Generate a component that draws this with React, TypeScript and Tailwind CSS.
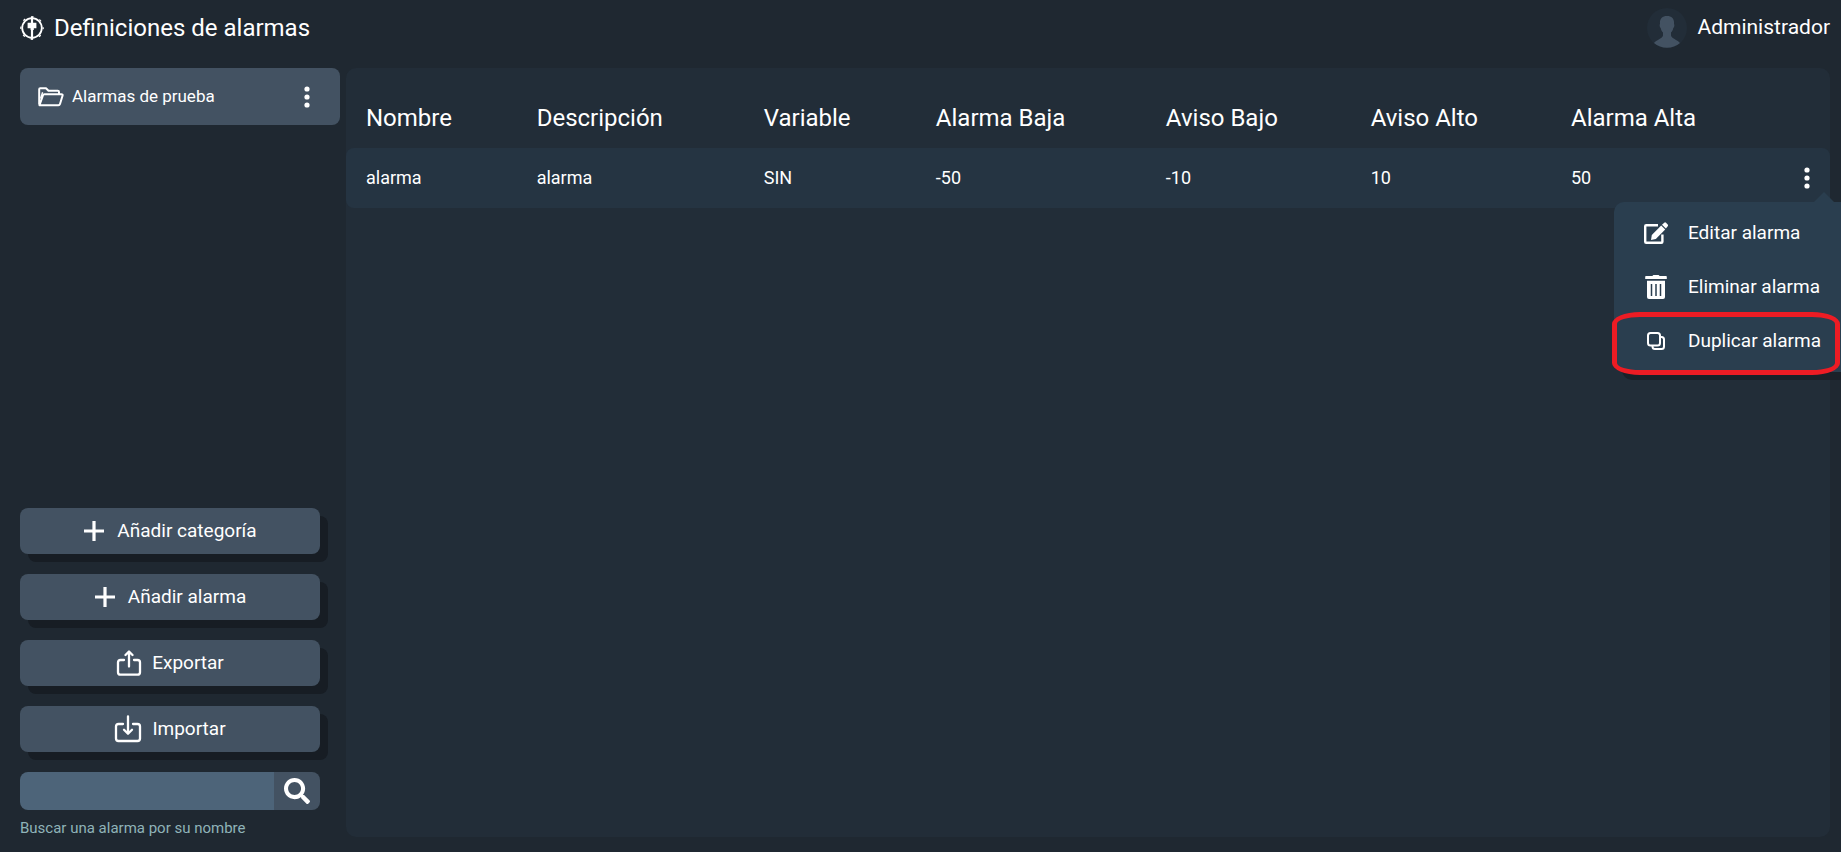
import { useState } from 'react';
import { FaSearch } from 'react-icons/fa';

type Alarm = {
  name: string;
  description: string;
  variable: string;
  lowAlarm: number;
  lowWarning: number;
  highWarning: number;
  highAlarm: number;
};

const alarms: Alarm[] = [
  {
    name: 'alarma',
    description: 'alarma',
    variable: 'SIN',
    lowAlarm: -50,
    lowWarning: -10,
    highWarning: 10,
    highAlarm: 50,
  },
];

const columns = [
  { label: 'Nombre', width: 'w-[11.5%]' },
  { label: 'Descripción', width: 'w-[15.3%]' },
  { label: 'Variable', width: 'w-[11.6%]' },
  { label: 'Alarma Baja', width: 'w-[15.5%]' },
  { label: 'Aviso Bajo', width: 'w-[13.8%]' },
  { label: 'Aviso Alto', width: 'w-[13.5%]' },
  { label: 'Alarma Alta', width: '' },
];

function LogoIcon() {
  return (
    <svg viewBox="0 0 24 24" className="w-6 h-6" fill="none" stroke="currentColor">
      <circle cx="12" cy="12" r="9.8" strokeWidth="1.8" />
      <circle cx="12" cy="12" r="11.2" strokeWidth="1.2" strokeDasharray="2.4 6.4" strokeDashoffset="1.2" />
      <path d="M12 0.5v23" strokeWidth="2.2" />
      <path d="M7.6 6.8h8.8v5.4h-2.6V14h-3.200v-1.800H7.600z" fill="currentColor" stroke="none" />
    </svg>
  );
}

function FolderIcon() {
  return (
    <svg viewBox="0 0 26 20" className="w-[26px] h-5" fill="none" stroke="currentColor" strokeWidth="2" strokeLinejoin="round">
      <path d="M1.2 17.5V2.2Q1.2 1.2 2.2 1.2H8l2.5 2.6h9.3q1.2 0 1.2 1.2v2" />
      <path d="M1.5 18.2 5 8.2q.4-1 1.4-1h17q1.6 0 1.2 1.4l-2.6 8.4q-.4 1.2-1.6 1.2H1.5z" />
      <path d="M2.6 11.5 4.6 5.2" strokeWidth="1.4" />
    </svg>
  );
}

function DotsIcon() {
  return (
    <svg viewBox="0 0 6 22" className="w-[6px] h-[22px]" fill="currentColor">
      <circle cx="3" cy="3" r="2.6" />
      <circle cx="3" cy="11" r="2.6" />
      <circle cx="3" cy="19" r="2.6" />
    </svg>
  );
}

function PlusIcon() {
  return (
    <svg viewBox="0 0 22 22" className="w-[22px] h-[22px]" fill="none" stroke="currentColor" strokeWidth="3.2">
      <path d="M11 1v20M1 11h20" />
    </svg>
  );
}

function ExportIcon() {
  return (
    <svg viewBox="0 0 26 26" className="w-[26px] h-[26px]" fill="none" stroke="currentColor" strokeWidth="2.3" strokeLinecap="round" strokeLinejoin="round">
      <path d="M8 10H4.5Q2 10 2 12.5v9.7Q2 24.7 4.5 24.7h17q2.5 0 2.5-2.5v-9.7Q24 10 21.5 10H18" />
      <path d="M13 16.5V2M9.5 5 13 1.5 16.5 5" />
    </svg>
  );
}

function ImportIcon() {
  return (
    <svg viewBox="0 0 28 28" className="w-7 h-7" fill="none" stroke="currentColor" strokeWidth="2.3" strokeLinecap="round" strokeLinejoin="round">
      <path d="M9 9H4.5Q2 9 2 11.5v12Q2 26 4.5 26h19q2.5 0 2.5-2.5v-12Q26 9 23.5 9H19" />
      <path d="M14 1.5v17M10 14.8l4 4 4-4" />
    </svg>
  );
}

function EditIcon() {
  return (
    <svg viewBox="0 0 24 22" className="w-6 h-[22px]" fill="none">
      <path d="M14 3.2H2.2Q1.2 3.2 1.2 4.2v15.6q0 1 1 1h15.2q1 0 1-1V12.5" stroke="currentColor" strokeWidth="2.4" />
      <path d="M7 18l.8-5.1 9.4-9.3 4 4-9.4 9.4z" fill="currentColor" />
      <path d="M18 2.8 20.2.7q.9-.7 1.8 0l1.7 1.8q.7.9 0 1.8L21.9 6.5z" fill="currentColor" />
    </svg>
  );
}

function TrashIcon() {
  return (
    <svg viewBox="0 0 22 24" className="w-6 h-6">
      <path d="M7.5 1q.3-1 1.2-1h4.6q.9 0 1.2 1H21q.8 0 .8.8v2.2H.2V1.8Q.2 1 1 1z" fill="currentColor" />
      <path d="M2 5.8h18V22q0 2-2 2H4q-2 0-2-2z" fill="currentColor" />
      <path d="M6.5 9v12M11 9v12M15.5 9v12" stroke="#2a3e4f" strokeWidth="1.5" />
    </svg>
  );
}

function CopyIcon() {
  return (
    <svg viewBox="0 0 18 18" className="w-[18px] h-[18px] mx-[3px]" fill="none" stroke="currentColor" strokeWidth="2" strokeLinejoin="round">
      <rect x="1" y="1" width="12" height="12.5" rx="2.5" />
      <path d="M13 5h1.5Q17 5 17 7.5V14.5q0 2.5-2.5 2.5H8q-2.5 0-2.5-2.5v-1" />
    </svg>
  );
}

function Avatar() {
  return (
    <svg viewBox="0 0 40 40" className="w-10 h-10">
      <circle cx="20" cy="20" r="20" fill="#222d38" />
      <path d="M20 8c5 0 7.5 3 7 8 .6.5.5 3-.7 4-.4 2-1.3 3.5-2.3 4.5v3c.5 3 6 4 9 7.5A20 20 0 0 1 7 35c3-3.500 8.500-4.500 9-7.500v-3c-1-1-1.900-2.500-2.300-4.500-1.200-1-1.300-3.500-.7-4-.5-5 2-8 7-8z" fill="#435262" />
    </svg>
  );
}

const actions = [
  { label: 'Añadir categoría', icon: <PlusIcon />, gap: 'gap-3' },
  { label: 'Añadir alarma', icon: <PlusIcon />, gap: 'gap-3' },
  { label: 'Exportar', icon: <ExportIcon />, gap: 'gap-[10px]' },
  { label: 'Importar', icon: <ImportIcon />, gap: 'gap-[10px]' },
];

const menuItems = [
  { label: 'Editar alarma', icon: <EditIcon /> },
  { label: 'Eliminar alarma', icon: <TrashIcon /> },
  { label: 'Duplicar alarma', icon: <CopyIcon /> },
];

function AlarmMenu() {
  return (
    <div className="absolute top-[54px] -right-3 w-[228px] h-[170px] rounded-l-[10px] bg-[#2a3e4f] shadow-[8px_8px_0_#1a2129] z-10">
      <span className="absolute -top-[10px] right-2 border-x-10 border-b-10 border-x-transparent border-b-[#2a3e4f]" />
      <ul className="pt-1">
        {menuItems.map((item) => (
          <li key={item.label}>
            <button className="w-full h-[54px] flex items-center gap-5 pl-[30px] text-[19px] whitespace-nowrap">
              {item.icon}
              {item.label}
            </button>
          </li>
        ))}
      </ul>
      {/* Highlight around the last option */}
      <div className="absolute -left-[2px] right-[2px] top-[110px] h-[63px] border-[5px] border-[#ed1c24] rounded-[28px/12px] pointer-events-none" />
    </div>
  );
}

export default function App() {
  const [search, setSearch] = useState('');
  const [openRow, setOpenRow] = useState<number | null>(0);

  return (
    <div className="h-screen flex flex-col overflow-hidden bg-[#1f2831] text-white font-[Roboto,sans-serif]">
      {/* Header */}
      <header className="h-[68px] shrink-0 flex items-start justify-between pl-5 pr-[11px] pt-2">
        <div className="h-10 flex items-center gap-[10px]">
          <LogoIcon />
          <h1 className="text-2xl">Definiciones de alarmas</h1>
        </div>
        <div className="h-10 flex items-center gap-[10px]">
          <Avatar />
          <span className="text-[21px]">Administrador</span>
        </div>
      </header>

      <div className="flex-1 min-h-0 flex gap-[6px] pr-[11px] pb-[15px]">
        {/* Sidebar */}
        <aside className="w-[340px] shrink-0 pl-5 flex flex-col">
          <div className="h-[57px] flex items-center rounded-lg bg-[#435262] pl-[18px] pr-[30px]">
            <button className="flex-1 flex items-center gap-2 text-[17px]">
              <FolderIcon />
              Alarmas de prueba
            </button>
            <button aria-label="Opciones de categoría">
              <DotsIcon />
            </button>
          </div>

          <div className="mt-auto mr-5 flex flex-col gap-5">
            {actions.map((action) => (
              <button
                key={action.label}
                className={`h-[46px] flex items-center justify-center rounded-lg bg-[#435262] shadow-[8px_8px_0_#171d24] text-[19px] ${action.gap}`}
              >
                {action.icon}
                {action.label}
              </button>
            ))}
            <div>
              <div className="h-[38px] flex rounded-lg overflow-hidden">
                <input
                  id="search"
                  type="text"
                  value={search}
                  onChange={(e) => setSearch(e.target.value)}
                  className="flex-1 min-w-0 bg-[#4d6479] px-3 outline-none"
                />
                <button aria-label="Buscar" className="w-[46px] flex items-center justify-center bg-[#435262]">
                  <FaSearch className="w-[26px] h-[26px]" />
                </button>
              </div>
              <label htmlFor="search" className="block mt-[10px] text-[15px] leading-[17px] text-[#8fb3b8]">
                Buscar una alarma por su nombre
              </label>
            </div>
          </div>
        </aside>

        {/* Alarm table */}
        <main className="flex-1 min-w-0 rounded-[10px] bg-[#222d38]">
          <table className="w-full table-fixed border-separate border-spacing-0 text-left">
            <thead>
              <tr className="h-20">
                {columns.map((column) => (
                  <th key={column.label} className={`pl-5 pt-5 text-2xl font-normal ${column.width}`}>
                    {column.label}
                  </th>
                ))}
              </tr>
            </thead>
            <tbody>
              {alarms.map((alarm, i) => (
                <tr key={alarm.name} className="h-[60px] bg-[#253442] text-lg">
                  <td className="pl-5 rounded-l-lg">{alarm.name}</td>
                  <td className="pl-5">{alarm.description}</td>
                  <td className="pl-5">{alarm.variable}</td>
                  <td className="pl-5">{alarm.lowAlarm}</td>
                  <td className="pl-5">{alarm.lowWarning}</td>
                  <td className="pl-5">{alarm.highWarning}</td>
                  <td className="pl-5 rounded-r-lg relative">
                    <div className="flex items-center justify-between pr-5">
                      {alarm.highAlarm}
                      <button
                        aria-label="Opciones de alarma"
                        onClick={() => setOpenRow(openRow === i ? null : i)}
                      >
                        <DotsIcon />
                      </button>
                    </div>
                    {openRow === i && <AlarmMenu />}
                  </td>
                </tr>
              ))}
            </tbody>
          </table>
        </main>
      </div>
    </div>
  );
}
